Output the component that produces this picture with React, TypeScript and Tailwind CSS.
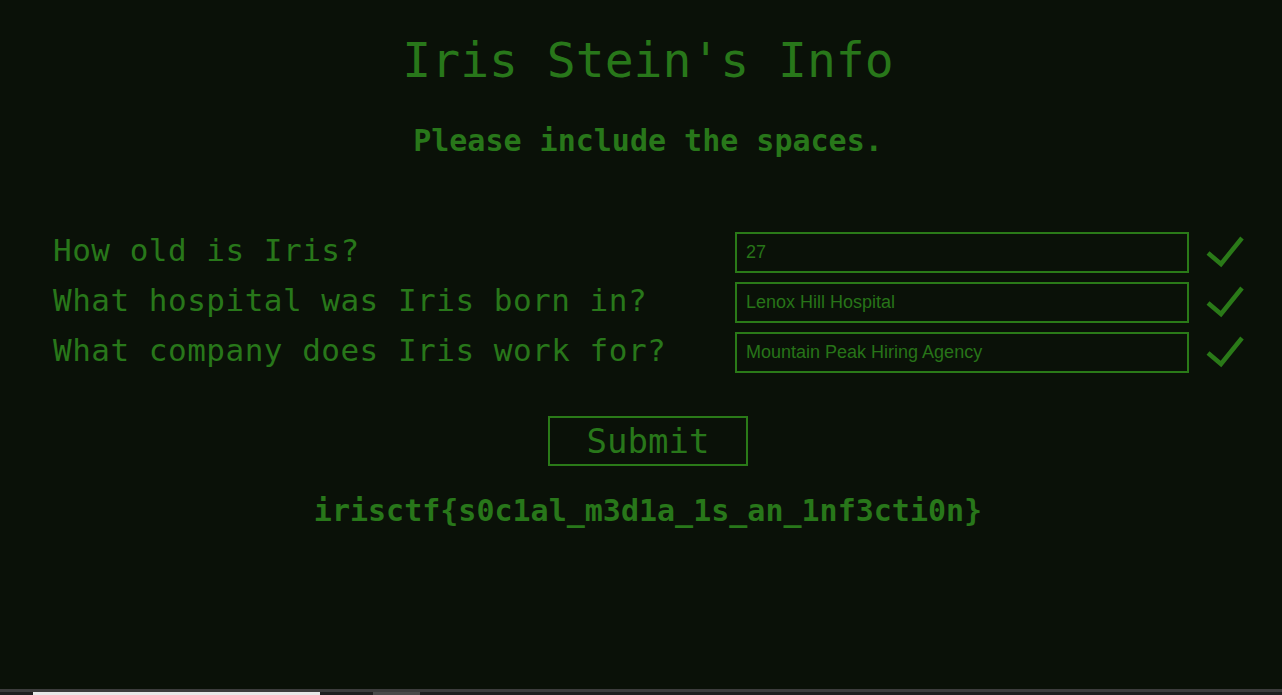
import React from "react";

const rows = [
  { q: "How old is Iris?", a: "27" },
  { q: "What hospital was Iris born in?", a: "Lenox Hill Hospital" },
  { q: "What company does Iris work for?", a: "Mountain Peak Hiring Agency" },
];

function Check() {
  return (
    <svg width="40" height="41" viewBox="0 0 40 41" className="shrink-0">
      <polyline
        points="4,21 17,32 38,6"
        fill="none"
        stroke="#2a7a18"
        strokeWidth="4.5"
        strokeLinecap="butt"
        strokeLinejoin="miter"
      />
    </svg>
  );
}

export default function App() {
  const mono = { fontFamily: '"DejaVu Sans Mono", "Liberation Mono", monospace' };
  return (
    <div className="flex h-[695px] w-full flex-col bg-[#0a1108] text-[#28771a]">
      <div className="flex flex-1 flex-col" style={mono}>
        <div className="flex flex-col items-center pl-[14px]">
          <h1 className="mt-[32px] h-[56px] text-[48px] leading-[56px] font-medium">
            Iris Stein's Info
          </h1>
          <p className="mt-[35px] h-[36px] text-[30px] leading-[36px] font-bold">
            Please include the spaces.
          </p>
        </div>
        <div className="mt-[73px] flex w-full flex-col gap-[9px] pl-[53px] pr-[38px]">
          {rows.map((r) => (
            <div key={r.q} className="flex h-[41px] items-center">
              <div className="flex-1 pb-[4px] text-[31px] leading-[37px] font-light tracking-[0.5px]">{r.q}</div>
              <div
                className="flex h-[41px] w-[454px] items-center border-2 border-[#2a7a18] px-[9px] text-[18px] text-[#277418]"
                style={{ fontFamily: '"Liberation Sans", Arial, sans-serif' }}
              >
                {r.a}
              </div>
              <div className="ml-[15px]">
                <Check />
              </div>
            </div>
          ))}
        </div>
        <div className="flex flex-col items-center pl-[14px]">
          <button className="mt-[43px] flex h-[50px] w-[200px] items-center justify-center border-2 border-[#2a7a18] text-[34px] font-light leading-none">
            Submit
          </button>
          <p className="mt-[27px] h-[36px] text-[30px] leading-[36px] font-bold">
            irisctf&#123;s0c1al_m3d1a_1s_an_1nf3cti0n&#125;
          </p>
        </div>
      </div>
      <div className="h-[3px] w-full bg-[#3c3c3c]" />
      <div className="flex h-[3px] w-full bg-[#1e1e1e]">
        <div className="ml-[33px] w-[287px] bg-[#e8e8e8]" />
        <div className="ml-[53px] w-[47px] bg-[#4a4a4a]" />
      </div>
    </div>
  );
}
